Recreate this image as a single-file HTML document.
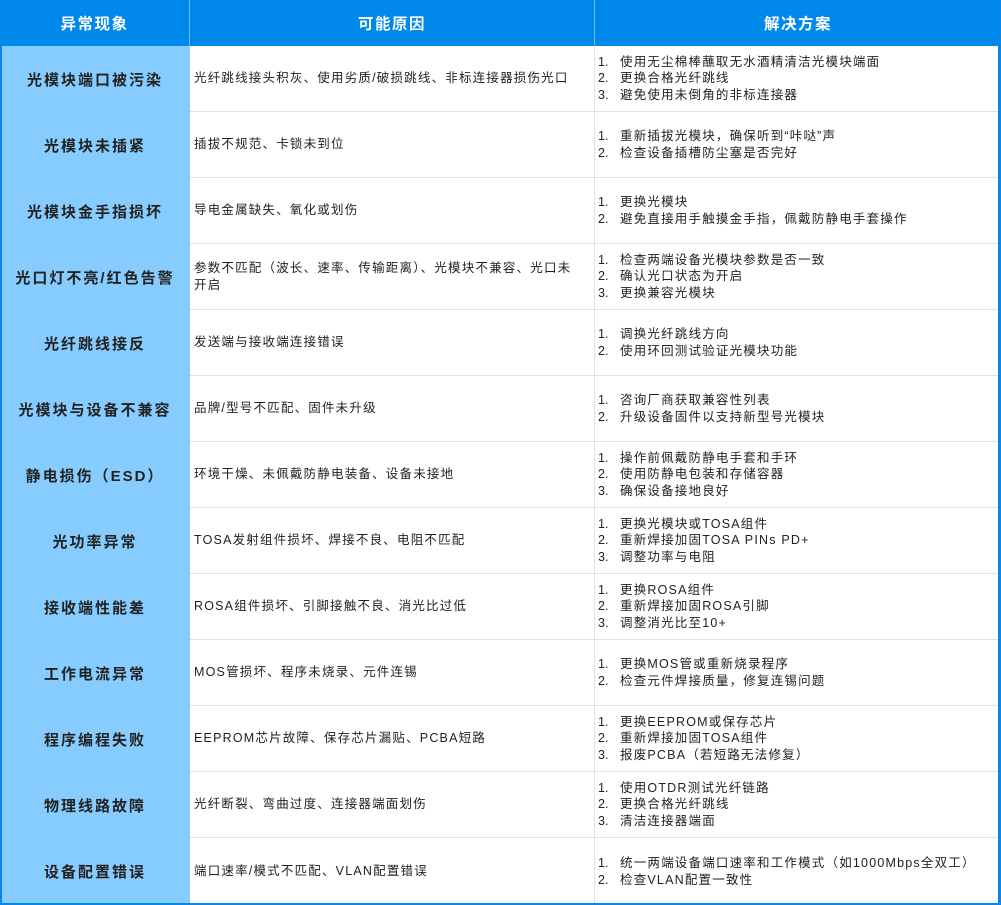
<!DOCTYPE html>
<html><head><meta charset="utf-8"><style>
*{margin:0;padding:0;box-sizing:border-box}
html,body{width:1001px;height:905px;overflow:hidden;background:#fff}
body{font-family:"Liberation Sans","Noto Sans CJK SC",sans-serif;color:#222;position:relative}
.frame{position:absolute;left:0;top:0;width:1001px;height:905px;border-left:2px solid #0a86ea;border-right:3px solid #0a86ea;border-bottom:2px solid #0a86ea}
.hd{position:absolute;top:0;height:46px;background:#0088ea;color:#fff;font-weight:bold;font-size:15.5px;letter-spacing:1.5px;display:flex;align-items:center;justify-content:center}
.c1{position:absolute;left:0;width:190px;height:66px;background:#87ccfe;font-weight:bold;font-size:15px;letter-spacing:2px;display:flex;align-items:center;justify-content:center;color:#222}
.c2{position:absolute;left:190px;width:405px;height:66px;border-bottom:1px solid #e2e2e2;border-right:1px solid #e2e2e2;font-size:12.5px;letter-spacing:1.2px;line-height:16.5px;display:flex;align-items:center;padding:0 18px 0 4px}
.c3{position:absolute;left:595px;width:403px;height:66px;border-bottom:1px solid #e2e2e2;font-size:12.5px;letter-spacing:1.2px;line-height:16.5px;display:flex;flex-direction:column;justify-content:center;padding-left:3px}
.c3 div span{display:inline-block;width:22px;letter-spacing:0}
</style></head><body>
<div class="hd" style="left:0;width:190px;border-right:1px solid #6fb8f3">异常现象</div>
<div class="hd" style="left:190px;width:405px;border-right:1px solid #6fb8f3">可能原因</div>
<div class="hd" style="left:595px;width:406px">解决方案</div>

<div class="c1" style="top:46px">光模块端口被污染</div>
<div class="c2" style="top:46px">光纤跳线接头积灰、使用劣质/破损跳线、非标连接器损伤光口</div>
<div class="c3" style="top:46px"><div><span>1.</span>使用无尘棉棒蘸取无水酒精清洁光模块端面</div><div><span>2.</span>更换合格光纤跳线</div><div><span>3.</span>避免使用未倒角的非标连接器</div></div>

<div class="c1" style="top:112px">光模块未插紧</div>
<div class="c2" style="top:112px">插拔不规范、卡锁未到位</div>
<div class="c3" style="top:112px"><div><span>1.</span>重新插拔光模块，确保听到“咔哒”声</div><div><span>2.</span>检查设备插槽防尘塞是否完好</div></div>

<div class="c1" style="top:178px">光模块金手指损坏</div>
<div class="c2" style="top:178px">导电金属缺失、氧化或划伤</div>
<div class="c3" style="top:178px"><div><span>1.</span>更换光模块</div><div><span>2.</span>避免直接用手触摸金手指，佩戴防静电手套操作</div></div>

<div class="c1" style="top:244px">光口灯不亮/红色告警</div>
<div class="c2" style="top:244px">参数不匹配（波长、速率、传输距离）、光模块不兼容、光口未开启</div>
<div class="c3" style="top:244px"><div><span>1.</span>检查两端设备光模块参数是否一致</div><div><span>2.</span>确认光口状态为开启</div><div><span>3.</span>更换兼容光模块</div></div>

<div class="c1" style="top:310px">光纤跳线接反</div>
<div class="c2" style="top:310px">发送端与接收端连接错误</div>
<div class="c3" style="top:310px"><div><span>1.</span>调换光纤跳线方向</div><div><span>2.</span>使用环回测试验证光模块功能</div></div>

<div class="c1" style="top:376px">光模块与设备不兼容</div>
<div class="c2" style="top:376px">品牌/型号不匹配、固件未升级</div>
<div class="c3" style="top:376px"><div><span>1.</span>咨询厂商获取兼容性列表</div><div><span>2.</span>升级设备固件以支持新型号光模块</div></div>

<div class="c1" style="top:442px">静电损伤（ESD）</div>
<div class="c2" style="top:442px">环境干燥、未佩戴防静电装备、设备未接地</div>
<div class="c3" style="top:442px"><div><span>1.</span>操作前佩戴防静电手套和手环</div><div><span>2.</span>使用防静电包装和存储容器</div><div><span>3.</span>确保设备接地良好</div></div>

<div class="c1" style="top:508px">光功率异常</div>
<div class="c2" style="top:508px">TOSA发射组件损坏、焊接不良、电阻不匹配</div>
<div class="c3" style="top:508px"><div><span>1.</span>更换光模块或TOSA组件</div><div><span>2.</span>重新焊接加固TOSA PINs PD+</div><div><span>3.</span>调整功率与电阻</div></div>

<div class="c1" style="top:574px">接收端性能差</div>
<div class="c2" style="top:574px">ROSA组件损坏、引脚接触不良、消光比过低</div>
<div class="c3" style="top:574px"><div><span>1.</span>更换ROSA组件</div><div><span>2.</span>重新焊接加固ROSA引脚</div><div><span>3.</span>调整消光比至10+</div></div>

<div class="c1" style="top:640px">工作电流异常</div>
<div class="c2" style="top:640px">MOS管损坏、程序未烧录、元件连锡</div>
<div class="c3" style="top:640px"><div><span>1.</span>更换MOS管或重新烧录程序</div><div><span>2.</span>检查元件焊接质量，修复连锡问题</div></div>

<div class="c1" style="top:706px">程序编程失败</div>
<div class="c2" style="top:706px">EEPROM芯片故障、保存芯片漏贴、PCBA短路</div>
<div class="c3" style="top:706px"><div><span>1.</span>更换EEPROM或保存芯片</div><div><span>2.</span>重新焊接加固TOSA组件</div><div><span>3.</span>报废PCBA（若短路无法修复）</div></div>

<div class="c1" style="top:772px">物理线路故障</div>
<div class="c2" style="top:772px">光纤断裂、弯曲过度、连接器端面划伤</div>
<div class="c3" style="top:772px"><div><span>1.</span>使用OTDR测试光纤链路</div><div><span>2.</span>更换合格光纤跳线</div><div><span>3.</span>清洁连接器端面</div></div>

<div class="c1" style="top:838px;height:67px">设备配置错误</div>
<div class="c2" style="top:838px;height:67px;border-bottom:none">端口速率/模式不匹配、VLAN配置错误</div>
<div class="c3" style="top:838px;height:67px;border-bottom:none"><div><span>1.</span>统一两端设备端口速率和工作模式（如1000Mbps全双工）</div><div><span>2.</span>检查VLAN配置一致性</div></div>

<div class="frame"></div>
</body></html>
